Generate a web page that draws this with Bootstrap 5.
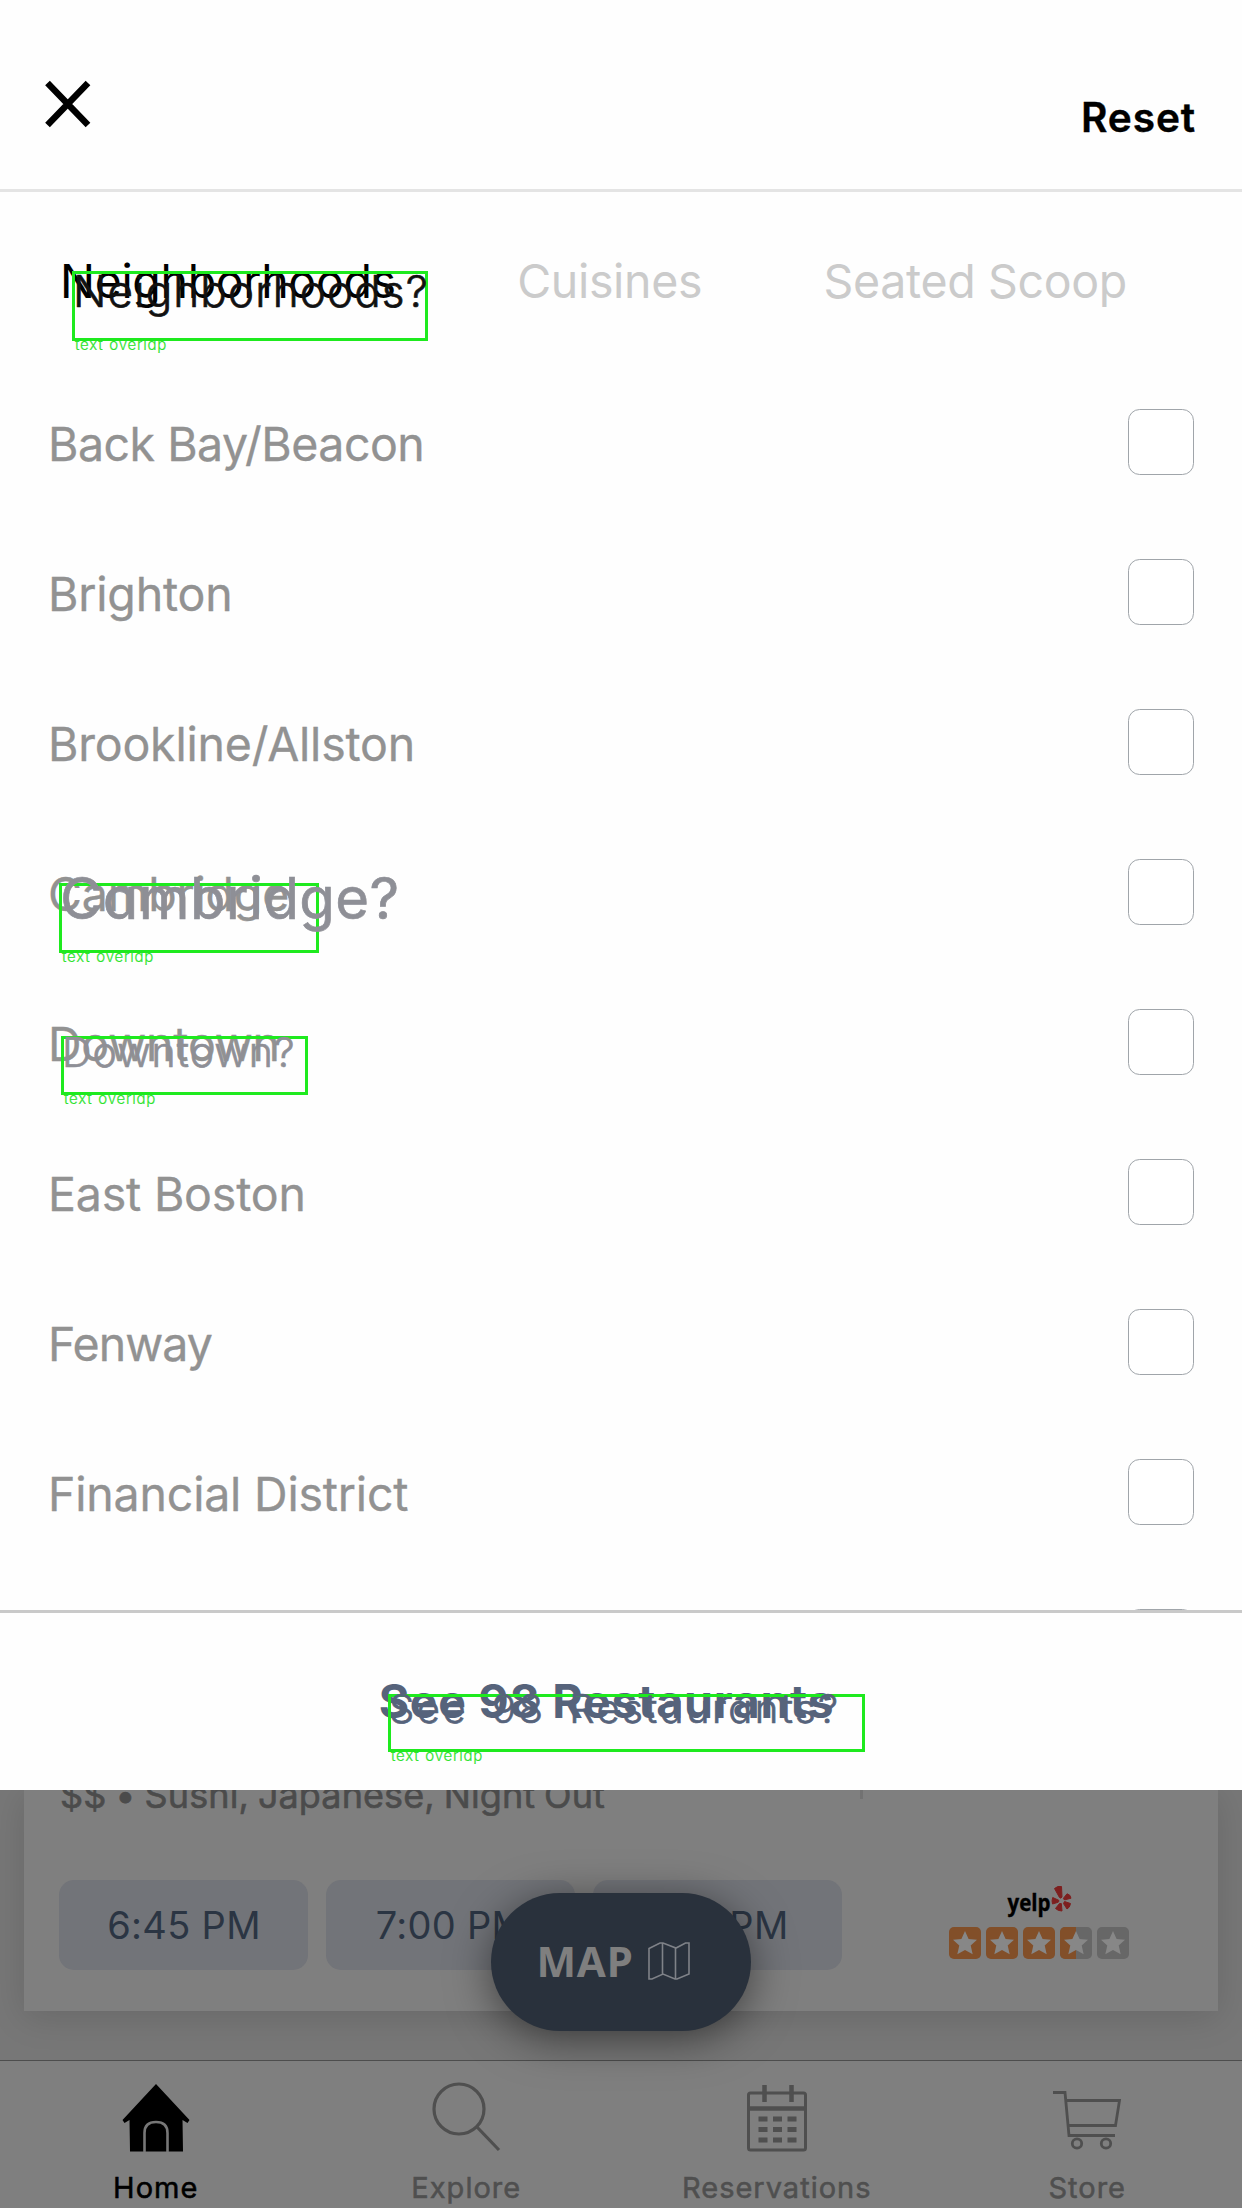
<!DOCTYPE html>
<html lang="en">
<head>
<meta charset="utf-8">
<meta name="viewport" content="width=device-width, initial-scale=1">
<title>Filter restaurants</title>
<link rel="stylesheet" href="https://cdn.jsdelivr.net/npm/bootstrap@5.3.0/dist/css/bootstrap.min.css">
<script src="https://cdn.jsdelivr.net/npm/bootstrap@5.3.0/dist/js/bootstrap.bundle.min.js"></script>
<style>
body{font-family:Inter,"Liberation Sans",sans-serif;background:#777;height:2208px;overflow:hidden}
svg{display:block;flex:none}
.sheet{background:#fefefe;height:1790px}
.sheet-head{height:192px;padding:78px 46px 0 44px;border-bottom:3px solid #e4e4e4}
.reset-btn{font-size:40.6px;line-height:50px;font-weight:600;letter-spacing:.9px;color:#000;margin-top:15px;-webkit-text-stroke:.4px #000}
.filter-tabs{height:175px;padding:59px 0 0 60px;gap:121.5px;font-size:46.5px;line-height:60px;letter-spacing:-.35px;color:#cbcbcb}
.tab-on{color:#000}
.option-list{height:1243px}
.option-row{height:150px;padding:0 48px;font-size:46.5px;letter-spacing:-.2px;color:#929292;flex:none}
.option-name{padding-top:6px;-webkit-text-stroke:.3px #929292}
.tight{letter-spacing:-.5px}
.tighter{letter-spacing:-1px}
.option-box{width:66px;height:66px;border:1.5px solid #a0a5aa;border-radius:7px;margin:0;background-color:#fff}
.sheet-foot{height:180px;border-top:3px solid #c9c9c9}
.see-btn{font-size:46.5px;line-height:60px;font-weight:700;letter-spacing:.75px;color:#56637b;margin:58px 0 0 -29px}
.note{border:3px solid #1eea1e;font-weight:300;font-feature-settings:"cv11";white-space:nowrap;color:#8e8f96;-webkit-text-stroke:.7px currentColor;text-indent:-2px}
.note-label{left:0;top:calc(100% + 3px);font-size:15px;line-height:8px;letter-spacing:.75px;color:#2be32b;font-weight:300;text-indent:0;word-spacing:1px;-webkit-text-stroke:.2px currentColor}
.note-a{left:72px;top:271px;width:356px;height:70px;font-size:44px;line-height:35px;letter-spacing:1.15px;color:#111}
.note-b{left:59px;top:883px;width:260px;height:70px;font-size:58px;line-height:25px;letter-spacing:.4px;font-weight:400}
.note-c{left:61px;top:1036px;width:247px;height:59px;font-size:41px;line-height:26px;letter-spacing:1.05px}
.note-d{left:388px;top:1694px;width:477px;height:58px;font-size:40px;line-height:24px;letter-spacing:2.5px;word-spacing:10px;color:#56637b}
.behind{height:271px;overflow:hidden;border-bottom:1px solid #4d4d4d}
.place{margin:0 24px;height:221px;background:#7f7f7f;box-shadow:0 6px 34px rgba(0,0,0,.13)}
.place-kind{font-size:36px;line-height:40px;letter-spacing:.1px;word-spacing:-1.3px;-webkit-text-stroke:.6px #4b4b4b;color:#4b4b4b;padding-left:36px;margin-top:-15px;width:586px;white-space:nowrap}
.place-line{width:3px;height:9px;background:#727272;margin-left:250px}
.slot-row{margin-top:65px;padding-left:35px;gap:18px}
.slot{width:249px;height:90px;border-radius:15px;background:#727479;font-size:38px;letter-spacing:.3px;color:#2b3543;padding-left:1px}
.yelp-mark{margin-left:89px}
.map-pill{left:491px;top:1893px;width:260px;height:138px;border-radius:69px;background:#29313c;color:#7f7f7f;font:700 42px "Noto Sans",sans-serif;letter-spacing:.7px;box-shadow:0 8px 44px rgba(0,0,0,.5);padding:0 15px 3px 0;gap:15px}
.tabbar{height:147px;background:#7f7f7f;color:#4f4f4f;font-size:29px;line-height:36px}
.tabbar-item{padding:18px 0 0 1px;letter-spacing:1px;-webkit-text-stroke:.55px currentColor}
.tabbar-item svg{margin-bottom:14.500px}
</style>
</head>
<body class="m-0">
<div class="sheet position-relative d-flex flex-column">
  <header class="sheet-head d-flex justify-content-between align-items-start">
    <svg width="48" height="52" viewBox="0 0 48 52" stroke="#000" stroke-width="6.500" role="img" aria-label="Close"><path d="M3.500 5 44 47M44 5 3.500 47"/></svg>
    <div class="reset-btn">Reset</div>
  </header>
  <nav class="filter-tabs d-flex text-nowrap">
    <span class="tab-on">Neighborhoods</span><span>Cuisines</span><span>Seated Scoop</span>
  </nav>
  <div class="option-list d-flex flex-column overflow-hidden">
    <label class="option-row d-flex align-items-center justify-content-between"><span class="option-name tight">Back Bay/Beacon</span><input class="form-check-input option-box" type="checkbox"></label>
    <label class="option-row d-flex align-items-center justify-content-between"><span class="option-name">Brighton</span><input class="form-check-input option-box" type="checkbox"></label>
    <label class="option-row d-flex align-items-center justify-content-between"><span class="option-name">Brookline/Allston</span><input class="form-check-input option-box" type="checkbox"></label>
    <label class="option-row d-flex align-items-center justify-content-between"><span class="option-name">Cambridge</span><input class="form-check-input option-box" type="checkbox"></label>
    <label class="option-row d-flex align-items-center justify-content-between"><span class="option-name">Downtown</span><input class="form-check-input option-box" type="checkbox"></label>
    <label class="option-row d-flex align-items-center justify-content-between"><span class="option-name">East Boston</span><input class="form-check-input option-box" type="checkbox"></label>
    <label class="option-row d-flex align-items-center justify-content-between"><span class="option-name tighter">Fenway</span><input class="form-check-input option-box" type="checkbox"></label>
    <label class="option-row d-flex align-items-center justify-content-between"><span class="option-name">Financial District</span><input class="form-check-input option-box" type="checkbox"></label>
    <div class="option-row d-flex align-items-center justify-content-end"><input class="form-check-input option-box" type="checkbox"></div>
  </div>
  <footer class="sheet-foot d-flex justify-content-center align-items-start">
    <div class="see-btn">See 98 Restaurants</div>
  </footer>
  <div class="note note-a position-absolute">Neighborhoods?<span class="note-label position-absolute">text overlap</span></div>
  <div class="note note-b position-absolute">Cambridge?<span class="note-label position-absolute">text overlap</span></div>
  <div class="note note-c position-absolute">Downtown?<span class="note-label position-absolute">text overlap</span></div>
  <div class="note note-d position-absolute">See 98 Restaurants?<span class="note-label position-absolute">text overlap</span></div>
</div>
<main class="behind">
  <section class="place d-flex flex-column">
    <div class="d-flex align-items-start">
      <div class="place-kind">$$ • Sushi, Japanese, Night Out</div>
      <div class="place-line"></div>
    </div>
    <div class="slot-row d-flex">
      <div class="slot d-flex align-items-center justify-content-center">6:45 PM</div>
      <div class="slot d-flex align-items-center justify-content-center">7:00 PM</div>
      <div class="slot d-flex align-items-center justify-content-center">7:15 PM</div>
      <svg class="yelp-mark" width="182" height="90" viewBox="0 0 182 90">
        <defs><path id="star" d="M16 4l3.600 8 8.400.8-6.300 5.700 2 8.800L16 23 8.300 27.300l2-8.800L4 12.800l8.400-.8z" fill="#878787"/></defs>
        <text x="58.500" y="31" font-family="Open Sans, sans-serif" font-weight="700" font-size="24" textLength="43" lengthAdjust="spacingAndGlyphs" fill="#000" stroke="#000" stroke-width=".4">yelp</text>
        <g fill="#7d1f1f" stroke="#7d1f1f" stroke-width="1"><path d="M105.500 8.500Q109 5.500 112.500 6.500L113 17Q112 19 110.500 17.500z"/><path d="M114.500 18.200 118 13.800Q121.500 14.500 122 18.200L116 19.800Q114.500 19.800 114.500 18.200z"/><path d="M115.500 21.500 121.500 23.500Q121 27.500 118 29L114.500 23.500z"/><path d="M112.300 23.500 113 31Q109 31 106.500 28.500L110.500 23.500z"/><path d="M103.700 17.500 109.800 20.300Q110.500 21.500 109 22.300L103.500 24Q102.500 21 103.700 17.500z"/></g>
        <g transform="translate(0 47)">
          <g><rect width="32" height="32" rx="5" fill="#824f29"/><use href="#star"/></g>
          <g transform="translate(37)"><rect width="32" height="32" rx="5" fill="#824f29"/><use href="#star"/></g>
          <g transform="translate(74)"><rect width="32" height="32" rx="5" fill="#824f29"/><use href="#star"/></g>
          <g transform="translate(111)"><rect width="32" height="32" rx="5" fill="#676767"/><path d="M16 0H5a5 5 0 0 0-5 5v22a5 5 0 0 0 5 5h11z" fill="#824f29"/><use href="#star"/></g>
          <g transform="translate(148)"><rect width="32" height="32" rx="5" fill="#676767"/><use href="#star"/></g>
        </g>
      </svg>
    </div>
  </section>
</main>
<div class="map-pill position-absolute d-flex align-items-center justify-content-center">MAP
  <svg width="42" height="38" viewBox="0 0 42 38" fill="none" stroke="#7f8288" stroke-width="1.600"><path d="M1 6.500 12 1h3L28 6l9.500-5H41V32L29 37H27L15 32 4 37H1zM14.500 1V32M27.500 6V37"/></svg>
</div>
<nav class="tabbar row g-0 text-center">
  <div class="tabbar-item col-3 d-flex flex-column align-items-center text-black">
    <svg width="80" height="76" viewBox="0 0 80 76"><path d="M40 5 73.500 41l-2 3-5-3 .5 31.500H14L13.500 41l-5 3-2-3z" fill="#000"/><path d="M28.500 73V54Q28.500 43 40 43T51.500 54V73" fill="none" stroke="#777" stroke-width="2.600"/></svg>Home
  </div>
  <div class="tabbar-item col-3 d-flex flex-column align-items-center">
    <svg width="80" height="76" viewBox="0 0 80 76" fill="none" stroke="#4f4f4f" stroke-width="3.200"><circle cx="33" cy="30" r="25"/><path d="M50.500 47.500 73 71"/></svg>Explore
  </div>
  <div class="tabbar-item col-3 d-flex flex-column align-items-center">
    <svg width="80" height="76" viewBox="0 0 80 76" fill="none" stroke="#4f4f4f" stroke-width="3"><rect x="11.500" y="14" width="57" height="57" rx="2"/><path d="M12 29.500H69" stroke-width="4.500"/><path d="M27.500 6V23M54.500 6V23" stroke-width="4.500"/><path d="M21.500 40h38M21.500 50.500h38M21.500 61h38" stroke-width="5" stroke-dasharray="9 5.500"/></svg>Reservations
  </div>
  <div class="tabbar-item col-3 d-flex flex-column align-items-center">
    <svg width="80" height="76" viewBox="0 0 80 76" fill="none" stroke="#4f4f4f" stroke-width="2.800"><path d="M6 13.500H18L22 56.500H68M19.500 21.500H72.500L68.500 46.500H22"/><circle cx="30" cy="64.500" r="4.700"/><circle cx="59" cy="64.500" r="4.700"/></svg>Store
  </div>
</nav>
</body>
</html>
